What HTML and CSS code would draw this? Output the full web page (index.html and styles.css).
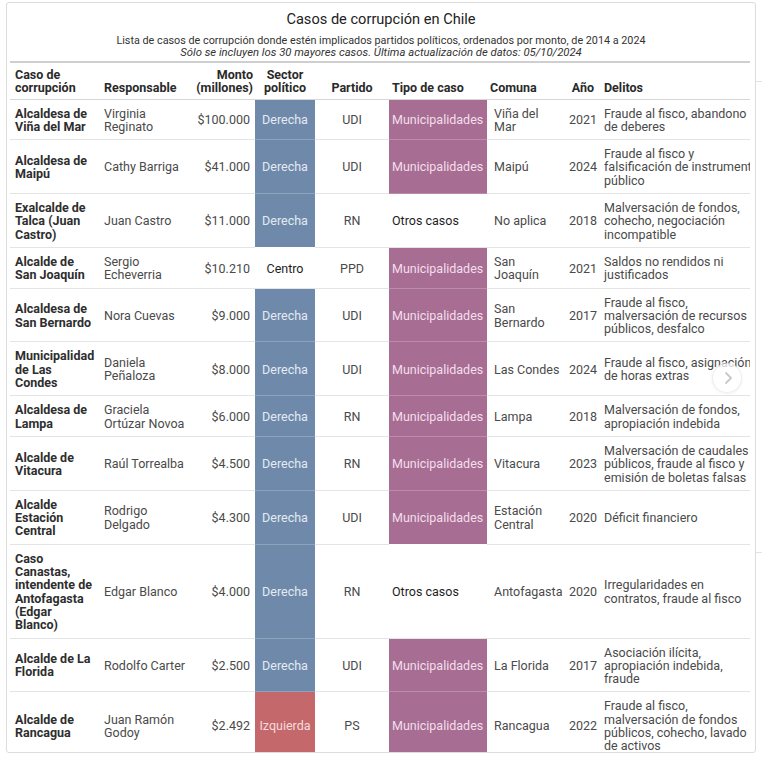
FILE: index.html
```html
<!DOCTYPE html>
<html lang="es">
<head>
<meta charset="utf-8">
<title>Casos de corrupción en Chile</title>
<link rel="stylesheet" href="styles.css">
</head>
<body>
<div class="page">
  <div class="card">
    <header class="head">
      <h1 class="title">Casos de corrupción en Chile</h1>
      <p class="desc">Lista de casos de corrupción donde estén implicados partidos políticos, ordenados por monto, de 2014 a 2024<br><em>Sólo se incluyen los 30 mayores casos. Última actualización de datos: 05/10/2024</em></p>
    </header>
    <div class="tablewrap">
      <table class="tbl">
        <colgroup>
          <col class="w-caso"><col class="w-resp"><col class="w-monto"><col class="w-sector"><col class="w-partido"><col class="w-tipo"><col class="w-comuna"><col class="w-anio"><col class="w-delitos">
        </colgroup>
        <thead>
          <tr>
            <th class="c-caso">Caso de corrupción</th>
            <th class="c-resp">Responsable</th>
            <th class="c-monto">Monto (millones)</th>
            <th class="c-sector">Sector político</th>
            <th class="c-partido">Partido</th>
            <th class="c-tipo">Tipo de caso</th>
            <th class="c-comuna">Comuna</th>
            <th class="c-anio">Año</th>
            <th class="c-delitos">Delitos</th>
          </tr>
        </thead>
        <tbody>
          <tr>
            <td class="c-caso">Alcaldesa de Viña del Mar</td>
            <td class="c-resp">Virginia Reginato</td>
            <td class="c-monto">$100.000</td>
            <td class="c-sector der">Derecha</td>
            <td class="c-partido">UDI</td>
            <td class="c-tipo muni">Municipalidades</td>
            <td class="c-comuna">Viña del Mar</td>
            <td class="c-anio">2021</td>
            <td class="c-delitos">Fraude al fisco, abandono de deberes</td>
          </tr>
          <tr>
            <td class="c-caso">Alcaldesa de Maipú</td>
            <td class="c-resp">Cathy Barriga</td>
            <td class="c-monto">$41.000</td>
            <td class="c-sector der">Derecha</td>
            <td class="c-partido">UDI</td>
            <td class="c-tipo muni">Municipalidades</td>
            <td class="c-comuna">Maipú</td>
            <td class="c-anio">2024</td>
            <td class="c-delitos">Fraude al fisco y falsificación de instrumento público</td>
          </tr>
          <tr>
            <td class="c-caso">Exalcalde de Talca (Juan Castro)</td>
            <td class="c-resp">Juan Castro</td>
            <td class="c-monto">$11.000</td>
            <td class="c-sector der">Derecha</td>
            <td class="c-partido">RN</td>
            <td class="c-tipo otros">Otros casos</td>
            <td class="c-comuna">No aplica</td>
            <td class="c-anio">2018</td>
            <td class="c-delitos">Malversación de fondos, cohecho, negociación incompatible</td>
          </tr>
          <tr>
            <td class="c-caso">Alcalde de San Joaquín</td>
            <td class="c-resp">Sergio Echeverria</td>
            <td class="c-monto">$10.210</td>
            <td class="c-sector centro">Centro</td>
            <td class="c-partido">PPD</td>
            <td class="c-tipo muni">Municipalidades</td>
            <td class="c-comuna">San Joaquín</td>
            <td class="c-anio">2021</td>
            <td class="c-delitos">Saldos no rendidos ni justificados</td>
          </tr>
          <tr>
            <td class="c-caso">Alcaldesa de San Bernardo</td>
            <td class="c-resp">Nora Cuevas</td>
            <td class="c-monto">$9.000</td>
            <td class="c-sector der">Derecha</td>
            <td class="c-partido">UDI</td>
            <td class="c-tipo muni">Municipalidades</td>
            <td class="c-comuna">San Bernardo</td>
            <td class="c-anio">2017</td>
            <td class="c-delitos">Fraude al fisco, malversación de recursos públicos, desfalco</td>
          </tr>
          <tr>
            <td class="c-caso">Municipalidad de Las Condes</td>
            <td class="c-resp">Daniela Peñaloza</td>
            <td class="c-monto">$8.000</td>
            <td class="c-sector der">Derecha</td>
            <td class="c-partido">UDI</td>
            <td class="c-tipo muni">Municipalidades</td>
            <td class="c-comuna">Las Condes</td>
            <td class="c-anio">2024</td>
            <td class="c-delitos">Fraude al fisco, asignación de horas extras</td>
          </tr>
          <tr>
            <td class="c-caso">Alcaldesa de Lampa</td>
            <td class="c-resp">Graciela Ortúzar Novoa</td>
            <td class="c-monto">$6.000</td>
            <td class="c-sector der">Derecha</td>
            <td class="c-partido">RN</td>
            <td class="c-tipo muni">Municipalidades</td>
            <td class="c-comuna">Lampa</td>
            <td class="c-anio">2018</td>
            <td class="c-delitos">Malversación de fondos, apropiación indebida</td>
          </tr>
          <tr>
            <td class="c-caso">Alcalde de Vitacura</td>
            <td class="c-resp">Raúl Torrealba</td>
            <td class="c-monto">$4.500</td>
            <td class="c-sector der">Derecha</td>
            <td class="c-partido">RN</td>
            <td class="c-tipo muni">Municipalidades</td>
            <td class="c-comuna">Vitacura</td>
            <td class="c-anio">2023</td>
            <td class="c-delitos">Malversación de caudales públicos, fraude al fisco y emisión de boletas falsas</td>
          </tr>
          <tr>
            <td class="c-caso">Alcalde Estación Central</td>
            <td class="c-resp">Rodrigo Delgado</td>
            <td class="c-monto">$4.300</td>
            <td class="c-sector der">Derecha</td>
            <td class="c-partido">UDI</td>
            <td class="c-tipo muni">Municipalidades</td>
            <td class="c-comuna">Estación Central</td>
            <td class="c-anio">2020</td>
            <td class="c-delitos">Déficit financiero</td>
          </tr>
          <tr>
            <td class="c-caso">Caso Canastas, intendente de Antofagasta (Edgar Blanco)</td>
            <td class="c-resp">Edgar Blanco</td>
            <td class="c-monto">$4.000</td>
            <td class="c-sector der">Derecha</td>
            <td class="c-partido">RN</td>
            <td class="c-tipo otros">Otros casos</td>
            <td class="c-comuna">Antofagasta</td>
            <td class="c-anio">2020</td>
            <td class="c-delitos">Irregularidades en contratos, fraude al fisco</td>
          </tr>
          <tr>
            <td class="c-caso">Alcalde de La Florida</td>
            <td class="c-resp">Rodolfo Carter</td>
            <td class="c-monto">$2.500</td>
            <td class="c-sector der">Derecha</td>
            <td class="c-partido">UDI</td>
            <td class="c-tipo muni">Municipalidades</td>
            <td class="c-comuna">La Florida</td>
            <td class="c-anio">2017</td>
            <td class="c-delitos">Asociación ilícita, apropiación indebida, fraude</td>
          </tr>
          <tr>
            <td class="c-caso">Alcalde de Rancagua</td>
            <td class="c-resp">Juan Ramón Godoy</td>
            <td class="c-monto">$2.492</td>
            <td class="c-sector izq">Izquierda</td>
            <td class="c-partido">PS</td>
            <td class="c-tipo muni">Municipalidades</td>
            <td class="c-comuna">Rancagua</td>
            <td class="c-anio">2022</td>
            <td class="c-delitos">Fraude al fisco, malversación de fondos públicos, cohecho, lavado de activos</td>
          </tr>
        </tbody>
      </table>
    </div>
    <button class="next" type="button" aria-label="Siguiente">
      <svg width="12" height="14" viewBox="0 0 12 14"><path d="M4 2 L9 7 L4 12" fill="none" stroke="#c8c8c8" stroke-width="1.8" stroke-linecap="round" stroke-linejoin="round"/></svg>
    </button>
  </div>
  <div class="peek"></div>
</div>
</body>
</html>
```

FILE: styles.css
```css
* { box-sizing: border-box; }
html, body { margin: 0; padding: 0; background: #fff; }
body {
  font-family: Roboto, "Liberation Sans", sans-serif;
  color: #333;
}
.page {
  display: flex;
  align-items: flex-start;
  padding: 2px 0 0 6px;
}
.card {
  position: relative;
  width: 750px;
  height: 751px;
  border: 1px solid #dcdcdc;
  border-radius: 3px;
  overflow: hidden;
  background: #fff;
}
.peek {
  flex: 1;
  height: 751px;
  background:
    linear-gradient(#e2e2e2, #e2e2e2) 0 79px / 100% 1px no-repeat,
    linear-gradient(#e2e2e2, #e2e2e2) 0 550px / 100% 1px no-repeat;
}
.head {
  text-align: center;
  padding-top: 7px;
}
.title {
  margin: 0;
  font-size: 14.6px;
  line-height: 19px;
  font-weight: 400;
  color: #222;
}
.desc {
  margin: 6px 0 0;
  font-size: 10.8px;
  line-height: 12px;
  color: #333;
}
.desc em { font-style: italic; font-size: 11.3px; }
.tablewrap {
  width: 740px;
  margin: 2px 0 0 3px;
  overflow: hidden;
}
.tbl {
  table-layout: fixed;
  width: 755px;
  border-collapse: collapse;
  border-top: 2px solid #cfcfcf;
  font-size: 12.5px;
  line-height: 13.3px;
}
.w-caso { width: 90px; }
.w-resp { width: 90px; }
.w-monto { width: 65px; }
.w-sector { width: 60px; }
.w-partido { width: 74px; }
.w-tipo { width: 98px; }
.w-comuna { width: 78px; }
.w-anio { width: 35px; }
.w-delitos { width: 165px; }

.tbl th {
  font-weight: 700;
  color: #2a2a2a;
  vertical-align: bottom;
  text-align: left;
  padding: 5px 4px 4px 4px;
  border-bottom: 1.5px solid #d6d6d6;
}
.tbl td {
  vertical-align: middle;
  text-align: left;
  padding: 7px 4px 6px 4px;
  color: #4a4a4a;
  border-bottom: 1px solid #e4e4e4;
}
.tbl .c-caso { padding-left: 5px; }
.tbl td.c-caso { font-weight: 700; color: #2e2e2e; }
.tbl .c-monto { text-align: right; padding-right: 5px; }
.tbl th.c-monto { padding-right: 2px; }
.tbl .c-sector { text-align: center; padding-left: 2px; padding-right: 2px; }
.tbl .c-partido { text-align: center; }
.tbl .c-tipo { padding-left: 3px; padding-right: 2px; }
.tbl .c-comuna { padding-left: 3px; }
.tbl td.c-comuna { padding-left: 7px; }
.tbl .c-anio { text-align: right; padding-right: 3px; padding-left: 0; }
.tbl th.c-anio { padding-right: 6px; }
.tbl .c-delitos { padding-left: 4px; }

.tbl td.der { background: #6e89aa; color: #e3eaf3; border-bottom-color: rgba(255,255,255,0.22); }
.tbl td.izq { background: #c4686c; color: #f6dcdd; border-bottom-color: rgba(255,255,255,0.22); }
.tbl td.muni { background: #a76d93; color: #f3dfec; border-bottom-color: rgba(255,255,255,0.22); }
.tbl td.centro, .tbl td.otros { color: #1e1e1e; }

.next {
  position: absolute;
  left: 705px;
  top: 360px;
  width: 30px;
  height: 30px;
  padding: 0;
  border-radius: 50%;
  border: 1px solid rgba(0,0,0,0.07);
  background: rgba(255,255,255,0.75);
  box-shadow: 0 1px 3px rgba(0,0,0,0.06);
  display: flex;
  align-items: center;
  justify-content: center;
}
.next svg { display: block; margin-left: 2px; }
```
